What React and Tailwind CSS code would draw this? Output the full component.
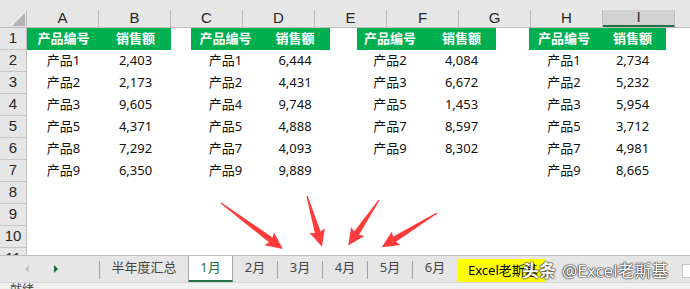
import React from "react";

const t1 = [["产品1", "2,403"], ["产品2", "2,173"], ["产品3", "9,605"], ["产品5", "4,371"], ["产品8", "7,292"], ["产品9", "6,350"]];
const t2 = [["产品1", "6,444"], ["产品2", "4,431"], ["产品4", "9,748"], ["产品5", "4,888"], ["产品7", "4,093"], ["产品9", "9,889"]];
const t3 = [["产品2", "4,084"], ["产品3", "6,672"], ["产品5", "1,453"], ["产品7", "8,597"], ["产品9", "8,302"]];
const t4 = [["产品1", "2,734"], ["产品2", "5,232"], ["产品3", "5,954"], ["产品5", "3,712"], ["产品7", "4,981"], ["产品9", "8,665"]];

// column J is only partly on screen, its letter falls outside
const cols = ["A", "B", "C", "D", "E", "F", "G", "H", "I", ""];
const rows = [1, 2, 3, 4, 5, 6, 7, 8, 9, 10, 11];

// tapered arrows drawn on the sheet: tail point, length, angle
const arrows = [
  { x: 221, y: 203, len: 77, rot: 36.6 },
  { x: 307, y: 196, len: 53, rot: 73.6 },
  { x: 379, y: 200, len: 55, rot: 124 },
  { x: 437, y: 213, len: 65, rot: 148.3 },
];

const Table = ({ data, className, c1, c2 }) => (
  <div className={className}>
    <div className="flex h-[22px] items-center bg-[#00b050] font-bold text-white">
      <div className={c1}>产品编号</div>
      <div className={c2}>销售额</div>
    </div>
    {data.map(([p, v]) => (
      <div key={p} className="flex h-[22px] items-center text-[#111]">
        <div className={c1}>{p}</div>
        <div className={c2}>{v}</div>
      </div>
    ))}
  </div>
);

const Tab = ({ label }) => (
  <div className="flex h-[24px] w-[44px] items-center justify-center text-[13px] text-[#444]">{label}</div>
);

const Sep = () => <div className="mt-[5px] h-[18px] w-px bg-[#a0a0a0]" />;

export default function App() {
  return (
    <div className="relative h-[289px] w-[690px] overflow-hidden bg-white font-['Noto_Sans','Noto_Sans_CJK_SC',sans-serif] text-[13px]">
      {/* column headers */}
      <div className="h-[10px] bg-[#e6e6e6]" />
      <div className="flex h-[18px] border-b border-[#bdbdbd] bg-[#e6e6e6] font-['Liberation_Sans',sans-serif]">
        <div className="flex w-[27px] shrink-0 items-end justify-end border-r border-[#bdbdbd] pb-[1px] pr-[1px]">
          <div className="h-0 w-0 border-b-[13px] border-l-[13px] border-b-[#b4b4b4] border-l-transparent" />
        </div>
        {cols.map((c) =>
          c === "I" ? (
            <div key={c} className="flex w-[72px] shrink-0 items-center justify-center border-r border-b-2 border-r-[#bdbdbd] border-b-[#217346] bg-[#d2d2d2] text-[15px] text-[#262626]">
              {c}
            </div>
          ) : (
            <div key={c} className="flex w-[72px] shrink-0 items-center justify-center border-r border-[#bdbdbd] text-[15px] text-[#262626]">
              {c}
            </div>
          )
        )}
      </div>

      {/* sheet body */}
      <div className="flex h-[227px] overflow-hidden">
        <div className="w-[27px] shrink-0 border-r border-[#bdbdbd] bg-[#e6e6e6] font-['Liberation_Sans',sans-serif]">
          {rows.map((r) => (
            <div key={r} className="flex h-[22px] items-center justify-center border-b border-[#c6c6c6] text-[15px] text-[#262626]">
              {r}
            </div>
          ))}
        </div>
        <div className="flex flex-1 items-start">
          <Table data={t1} className="w-[144px] shrink-0" c1="w-[73px] text-center" c2="w-[71px] text-center" />
          <Table data={t2} className="ml-[20px] w-[139px] shrink-0" c1="w-[69px] text-center" c2="w-[70px] text-center" />
          <Table data={t3} className="ml-[27px] w-[139px] shrink-0" c1="w-[66px] text-center" c2="w-[73px] pl-[4px] text-center" />
          <Table data={t4} className="ml-[33px] w-[137px] shrink-0" c1="w-[70px] text-center" c2="w-[67px] text-center" />
        </div>
      </div>

      {/* sheet tabs */}
      <div className="flex h-[27px] items-start border-t border-[#c0c0c0] bg-[#e6e6e6]">
        <div className="flex h-[25px] w-[99px] shrink-0 items-center">
          <div className="ml-[25px] h-0 w-0 border-y-[4px] border-r-[4px] border-y-transparent border-r-[#c4c4c4]" />
          <div className="ml-[25px] h-0 w-0 border-y-[4px] border-l-[4px] border-y-transparent border-l-[#1d6b3c]" />
        </div>
        <Sep />
        <div className="flex h-[24px] w-[88px] items-center justify-center text-[13px] text-[#444]">半年度汇总</div>
        <div className="flex h-[26px] w-[45px] items-center justify-center border-x border-b-2 border-x-[#a8a8a8] border-b-[#217346] bg-white text-[13px] text-[#217346]">
          1月
        </div>
        <Tab label="2月" />
        <Sep />
        <Tab label="3月" />
        <Sep />
        <Tab label="4月" />
        <Sep />
        <Tab label="5月" />
        <Sep />
        <Tab label="6月" />
        <div className="mt-[3px] flex h-[23px] w-[89px] items-center bg-[#ffff00] pl-[11px] text-[13px] text-black">Excel老斯基</div>
        <div className="ml-auto mt-[8px] h-[14px] w-[8px] border border-r-0 border-[#c6c6c6] bg-white" />
      </div>

      {/* status bar */}
      <div className="h-[7px] overflow-hidden border-t border-[#d4d4d4] bg-[#f0f0f0] pl-[10px] text-[12px] leading-[14px] text-[#444]">
        就绪
      </div>

      {/* arrows */}
      <svg className="pointer-events-none absolute left-0 top-0" width="690" height="289">
        {arrows.map((a, i) => (
          <polygon
            key={i}
            fill="#ff3b3b"
            transform={`translate(${a.x} ${a.y}) rotate(${a.rot})`}
            points={`0,-0.6 ${a.len - 15},-3 ${a.len - 17},-8 ${a.len},0 ${a.len - 17},8 ${a.len - 15},3 0,0.6`}
          />
        ))}
      </svg>

      {/* watermark */}
      <div className="pointer-events-none absolute left-[522px] top-[258px] flex items-center whitespace-nowrap text-white [text-shadow:0_0_2px_#222,0_0_1px_#222,0_0_1px_#222]">
        <span className="text-[17px] font-bold">头条</span>
        <span className="ml-[6px] text-[17px]">@Excel老斯基</span>
      </div>
    </div>
  );
}
